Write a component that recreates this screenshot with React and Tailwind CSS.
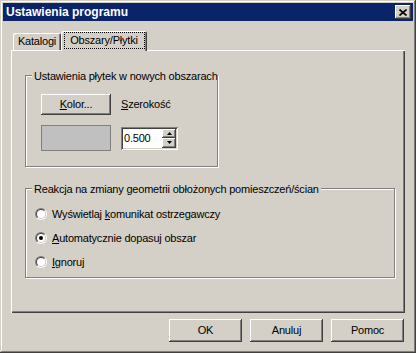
import React from 'react'

const raised =
  'shadow-[inset_-1px_-1px_0_#404040,inset_1px_1px_0_#fff,inset_-2px_-2px_0_#808080,inset_2px_2px_0_#d4d0c8]'
const sunken =
  'shadow-[inset_1px_1px_0_#808080,inset_-1px_-1px_0_#fff,inset_2px_2px_0_#404040,inset_-2px_-2px_0_#d4d0c8]'

function Btn({ children, className = '' }) {
  return (
    <div className={`flex items-center justify-center bg-[#d4d0c8] ${raised} ${className}`}>
      {children}
    </div>
  )
}

function GroupBox({ label, className = '', legendWidth, children }) {
  return (
    <div
      className={`flex flex-col border border-[#808080] shadow-[1px_1px_0_#fff,inset_1px_1px_0_#fff] ${className}`}
    >
      <div
        className={`-mt-[6px] ml-[6px] h-[13px] w-fit overflow-hidden whitespace-nowrap bg-[#d4d0c8] px-[2px] leading-[13px] ${legendWidth || ''}`}
      >
        {label}
      </div>
      {children}
    </div>
  )
}

function Radio({ checked, children }) {
  return (
    <div className="flex h-[24px] items-center gap-[5px]">
      <div className="h-[12px] w-[12px] rounded-full border border-t-[#808080] border-l-[#808080] border-b-white border-r-white">
        <div className="flex h-full w-full items-center justify-center rounded-full border border-t-[#404040] border-l-[#404040] border-b-[#d4d0c8] border-r-[#d4d0c8] bg-white">
          {checked ? <div className="h-[4px] w-[4px] rounded-full bg-black" /> : null}
        </div>
      </div>
      <span className="leading-[13px]">{children}</span>
    </div>
  )
}

function Arrow({ up }) {
  return (
    <svg width="5" height="3" viewBox="0 0 5 3">
      {up ? <path d="M2.5 0 L5 3 L0 3 Z" fill="#000" /> : <path d="M0 0 L5 0 L2.5 3 Z" fill="#000" />}
    </svg>
  )
}

export default function App() {
  return (
    <div
      className={`flex h-[353px] w-[416px] flex-col bg-[#d4d0c8] p-[3px] font-['Liberation_Sans',Arial,sans-serif] text-[11px] tracking-[-0.2px] text-black shadow-[inset_-1px_-1px_0_#404040,inset_1px_1px_0_#d4d0c8,inset_-2px_-2px_0_#808080,inset_2px_2px_0_#fff]`}
    >
      {/* title bar */}
      <div className="flex h-[18px] items-center justify-between bg-[#0a246a] pl-[3px] pr-[2px]">
        <span className="text-[12px] font-bold leading-[14px] tracking-normal text-white">Ustawienia programu</span>
        <Btn className="h-[14px] w-[16px]">
          <svg width="8" height="7" viewBox="0 0 8 7">
            <path d="M0.5 0.5 L7.5 6.5 M7.5 0.5 L0.5 6.5" stroke="#000" strokeWidth="1.6" />
          </svg>
        </Btn>
      </div>

      {/* tabs */}
      <div className="flex h-[29px] items-end pl-[10px]">
        <div className="flex h-[17px] w-[48px] items-center justify-center rounded-t-[2px] shadow-[inset_1px_1px_0_#fff,inset_-1px_0_0_#404040,inset_-2px_0_0_#808080]">
          <span className="leading-[13px]">Katalogi</span>
        </div>
        <div className="relative z-10 -mb-[1px] flex h-[20px] w-[86px] items-start justify-center rounded-t-[2px] bg-[#d4d0c8] pt-[1px] shadow-[inset_1px_1px_0_#fff,inset_-1px_0_0_#404040,inset_-2px_0_0_#808080]">
          <span className="flex h-[17px] w-[81px] items-center justify-center border border-dotted border-black leading-[13px]">
            Obszary/Płytki
          </span>
        </div>
      </div>

      {/* panel */}
      <div
        className={`ml-[8px] flex h-[263px] w-[394px] flex-col px-[14px] pt-[25px] shadow-[inset_1px_1px_0_#fff,inset_-1px_-1px_0_#404040,inset_-2px_-2px_0_#808080]`}
      >
        <GroupBox
          label="Ustawienia płytek w nowych obszarach"
          className="h-[92px] w-[193px]"
          legendWidth="max-w-[185px]"
        >
          <div className="mt-[11px] grid grid-cols-[70px_auto] gap-x-[10px] gap-y-[10px] pl-[15px]">
            <Btn className="h-[21px]">
              <span>
                <span className="underline">K</span>olor...
              </span>
            </Btn>
            <div className="flex items-center">
              <span>
                <span className="underline">S</span>zerokość
              </span>
            </div>
            <div className="h-[26px] border border-[#808080] bg-[#c0c0c0]" />
            <div className={`flex h-[23px] w-[57px] items-center self-center bg-white p-[2px] ${sunken}`}>
              <span className="flex-1 pl-[1px]">0.500</span>
              <div className="flex h-full w-[14px] flex-col">
                <Btn className="flex-1">
                  <Arrow up />
                </Btn>
                <Btn className="flex-1">
                  <Arrow />
                </Btn>
              </div>
            </div>
          </div>
        </GroupBox>

        <GroupBox
          label="Reakcja na zmiany geometrii obłożonych pomieszczeń/ścian"
          className="mt-[21px] h-[90px] w-[370px]"
        >
          <div className="mt-[6px] flex flex-col pl-[9px]">
            <Radio>
              Wyświetlaj <span className="underline">k</span>omunikat ostrzegawczy
            </Radio>
            <Radio checked>
              <span className="underline">A</span>utomatycznie dopasuj obszar
            </Radio>
            <Radio>
              <span className="underline">I</span>gnoruj
            </Radio>
          </div>
        </GroupBox>
      </div>

      {/* buttons */}
      <div className="mt-[6px] flex justify-end gap-[8px] pr-[9px]">
        <Btn className="h-[23px] w-[73px]">OK</Btn>
        <Btn className="h-[23px] w-[73px]">Anuluj</Btn>
        <Btn className="h-[23px] w-[73px]">Pomoc</Btn>
      </div>
    </div>
  )
}
